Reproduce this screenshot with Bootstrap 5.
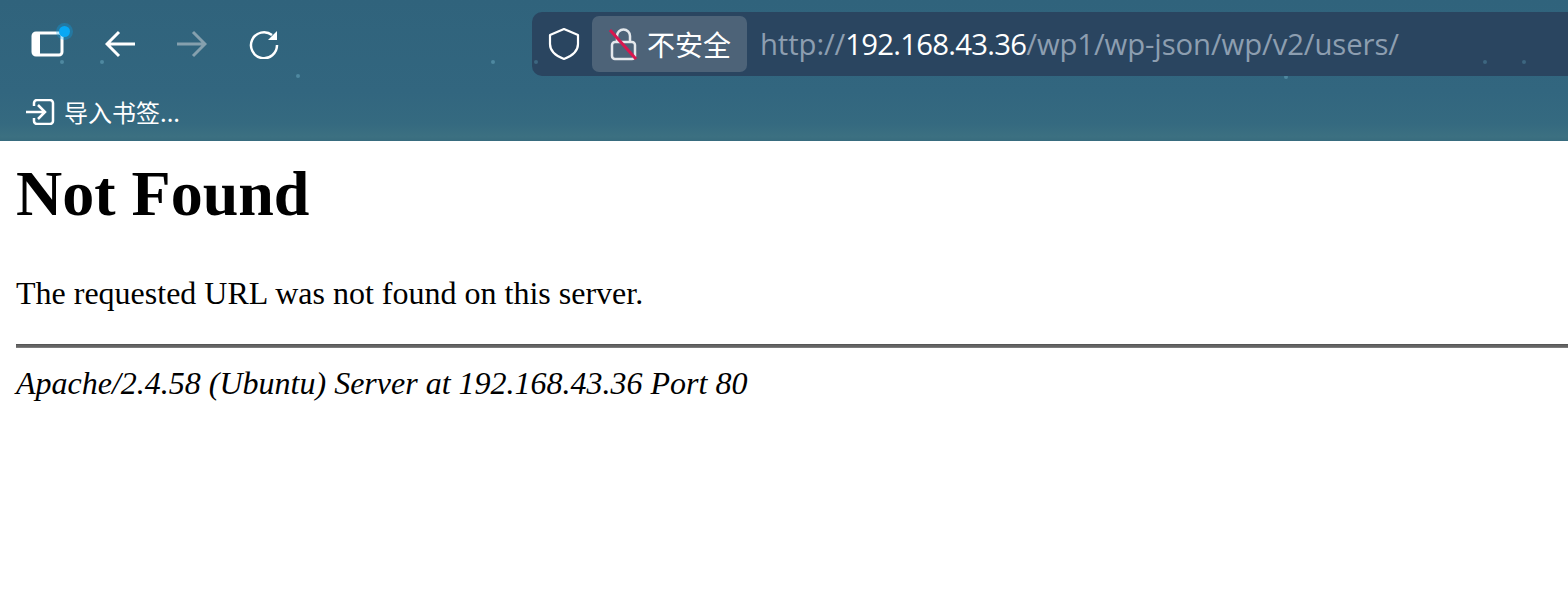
<!DOCTYPE html>
<html lang="zh-CN">
<head>
    <meta charset="UTF-8">
    <meta name="viewport" content="width=device-width, initial-scale=1.0">
    <title>Not Found</title>
    <link href="https://cdn.jsdelivr.net/npm/bootstrap@5.3.0/dist/css/bootstrap.min.css" rel="stylesheet">
    <style>
        html, body { background: #fff; overflow: hidden; }
        .browser-top {
            height: 141px;
            position: relative;
            background: linear-gradient(180deg, #30637c 0%, #32667f 65%, #356a80 88%, #3c7081 97%, #376b7e 100%);
            font-family: "Noto Sans", "Noto Sans CJK SC", sans-serif;
            color: #fff;
        }
        .tool-row { height: 88px; padding-left: 24px; }
        .tool-btn { width: 48px; height: 64px; margin-right: 24px; flex: none; position: relative; }
        .tool-btn:last-of-type { margin-right: 0; }
        .tab-dot {
            position: absolute; left: 35px; top: 14px;
            width: 11px; height: 11px; border-radius: 50%;
            background: #08a8f4; box-shadow: 0 0 0 3px rgba(8, 168, 244, .3);
        }
        .addr-bar {
            margin-left: 220px; height: 64px; flex: 1 1 auto;
            background: #2a4560; border-radius: 10px 0 0 10px;
            padding-left: 16px;
        }
        .shield-box { width: 44px; flex: none; }
        .unsafe-chip {
            width: 155px; height: 56px; flex: none;
            background: #4d6378; border-radius: 7px;
            padding-left: 16px; font-size: 28px;
            font-family: "Noto Sans CJK SC", sans-serif;
            gap: 9px;
        }
        .url-text {
            margin-left: 13px; padding-top: 2px; font-size: 29.3px; color: #8d9eb0;
            font-family: "Open Sans", "Noto Sans", sans-serif;
            white-space: nowrap; letter-spacing: -.1px;
        }
        .url-text b { font-weight: 400; color: #fff; letter-spacing: -.74px; }
        .mark-row { height: 48px; padding-left: 25px; font-size: 24px; font-family: "Noto Sans CJK SC", sans-serif; gap: 9px; }
        .star-dot { position: absolute; width: 4px; height: 4px; border-radius: 50%; background: #4f88a0; }
        .err-page {
            font-family: "Liberation Serif", "Times New Roman", serif;
            font-size: 32px; line-height: normal; color: #000;
            padding: 0 16px 16px;
        }
        .err-page h1 { font-size: 64px; font-weight: 700; line-height: 74px; margin: 16px 0 0; font-family: inherit; }
        .err-page p { margin: 44px 0 0; line-height: 37px; }
        .err-rule { height: 4px; margin: 32px -16px 0 0; opacity: 1; border: 0; background: #646464; border-top: 1px solid #555; border-bottom: 1px solid #7c7c7c; }
        .err-page address { margin: 17px 0 0; font-style: italic; line-height: 37px; }
    </style>
</head>
<body>

<!-- barra do navegador -->
<div class="browser-top">
    <i class="star-dot" style="left:60px;top:60px"></i>
    <i class="star-dot" style="left:100px;top:60px"></i>
    <i class="star-dot" style="left:296px;top:74px"></i>
    <i class="star-dot" style="left:491px;top:60px"></i>
    <i class="star-dot" style="left:1284px;top:75px"></i>

    <div class="tool-row d-flex align-items-center">
        <div class="tool-btn d-flex align-items-center justify-content-center">
            <svg width="34" height="26" viewBox="0 0 34 26" fill="none">
                <rect x="2" y="2" width="29" height="22" rx="3" stroke="#fff" stroke-width="3"/>
                <path d="M4 3h5v20H4a2 2 0 0 1-2-2V5a2 2 0 0 1 2-2z" fill="#fff"/>
            </svg>
            <span class="tab-dot"></span>
        </div>
        <div class="tool-btn d-flex align-items-center justify-content-center">
            <svg width="30" height="28" viewBox="0 0 30 28" fill="none" stroke="#fff" stroke-width="3">
                <path d="M2 14h28M14 2 2 14l12 12"/>
            </svg>
        </div>
        <div class="tool-btn d-flex align-items-center justify-content-center">
            <svg width="30" height="28" viewBox="0 0 30 28" fill="none" stroke="#85a0ae" stroke-width="3">
                <path d="M0 14h28M16 2l12 12-12 12"/>
            </svg>
        </div>
        <div class="tool-btn d-flex align-items-center justify-content-center">
            <svg width="30" height="30" viewBox="0 0 30 30" fill="none">
                <path d="M23 6A13 13 0 1 0 28 16" stroke="#fff" stroke-width="2.500"/>
                <path d="M28 2v9H19z" fill="#fff"/>
            </svg>
        </div>
        <div class="addr-bar d-flex align-items-center position-relative">
            <i class="star-dot" style="left:2px;top:48px;opacity:.5"></i>
            <i class="star-dot" style="left:951px;top:48px;opacity:.5"></i>
            <i class="star-dot" style="left:990px;top:48px;opacity:.5"></i>
            <div class="shield-box d-flex align-items-center">
                <svg width="32" height="34" viewBox="0 0 32 34" fill="none" stroke="#fff" stroke-width="2.200" stroke-linejoin="round">
                    <path d="M16 2 30 8v9c0 7-6 12-14 15C8 29 2 24 2 17V8z"/>
                </svg>
            </div>
            <div class="unsafe-chip d-flex align-items-center">
                <svg width="30" height="34" viewBox="0 0 30 34" fill="none">
                    <path d="M9 16V9a6.500 6.500 0 0 1 13 0v7" stroke="#e4e8ec" stroke-width="2.500"/>
                    <rect x="4" y="15" width="23" height="17" rx="3" stroke="#e4e8ec" stroke-width="2.500"/>
                    <path d="M2 3l26 29" stroke="#d8174f" stroke-width="3"/>
                </svg>
                <span>不安全</span>
            </div>
            <div class="url-text">http://<b>192.168.43.36</b>/wp1/wp-json/wp/v2/users/</div>
        </div>
    </div>

    <div class="mark-row d-flex align-items-center">
        <svg width="30" height="26" viewBox="0 0 30 26" fill="none" stroke="#fff" stroke-width="2.500">
            <path d="M9 7V4a3 3 0 0 1 3-3h13a3 3 0 0 1 3 3v18a3 3 0 0 1-3 3H12a3 3 0 0 1-3-3v-3"/>
            <path d="M1 13h19M13 6l7 7-7 7"/>
        </svg>
        <span>导入书签...</span>
    </div>
</div>

<!-- conteudo da pagina -->
<div class="err-page">
    <h1>Not Found</h1>
    <p>The requested URL was not found on this server.</p>
    <hr class="err-rule">
    <address>Apache/2.4.58 (Ubuntu) Server at 192.168.43.36 Port 80</address>
</div>

<script src="https://cdn.jsdelivr.net/npm/bootstrap@5.3.0/dist/js/bootstrap.bundle.min.js"></script>
</body>
</html>
